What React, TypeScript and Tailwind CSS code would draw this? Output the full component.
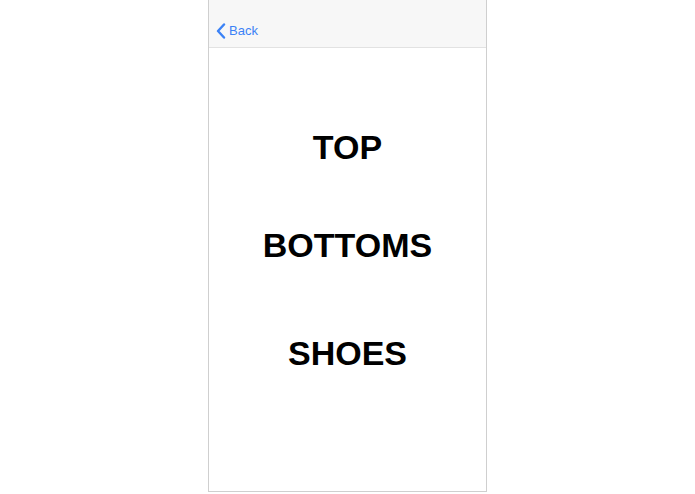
export default function App() {
  return (
    <div className="w-[695px] h-[494px] bg-white overflow-hidden" style={{ fontFamily: '"Liberation Sans", Arial, sans-serif' }}>
      <div className="mx-auto w-[279px] h-[492px] border-x border-b border-[#cfcfcf] flex flex-col bg-white">
        <div className="h-[48px] bg-[#f7f7f7] border-b border-[#e2e2e2] flex items-end pb-[8px] pl-[7px]">
          <button className="flex items-center text-[#3b82f6] text-[13px] leading-[16px]">
            <svg width="10" height="16" viewBox="0 0 10 16" className="mr-[3px]">
              <path d="M8 1.5 L2 8 L8 14.5" fill="none" stroke="#3b82f6" strokeWidth="2.4" strokeLinecap="round" strokeLinejoin="round" />
            </svg>
            Back
          </button>
        </div>
        <div className="flex flex-col items-center pt-[79px] text-black font-bold text-[34px] leading-[40px]">
          <div>TOP</div>
          <div className="mt-[58px]">BOTTOMS</div>
          <div className="mt-[68px]">SHOES</div>
        </div>
      </div>
    </div>
  )
}
